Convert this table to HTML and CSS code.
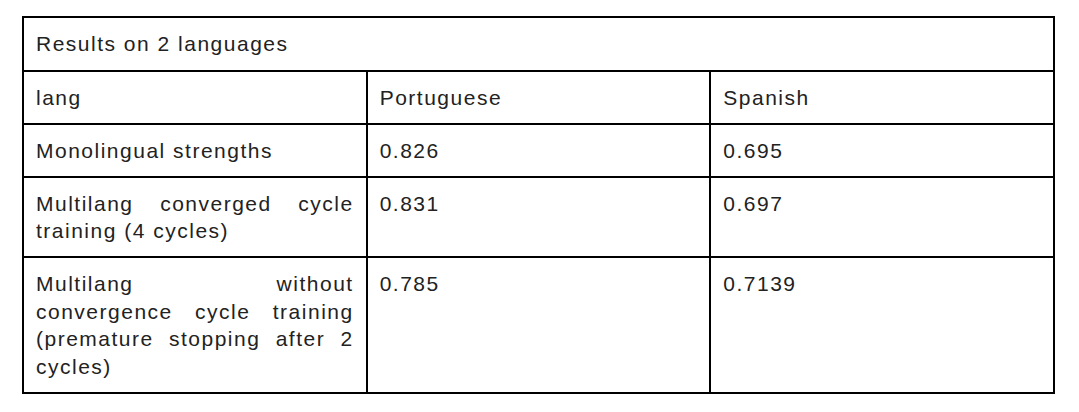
FILE: index.html
```html
<!DOCTYPE html>
<html>
<head>
<meta charset="utf-8">
<link rel="stylesheet" href="styles.css">
</head>
<body>
<table class="results">
  <colgroup><col class="c"><col class="c"><col class="c"></colgroup>
  <tr><td colspan="3" class="title">Results on 2 languages</td></tr>
  <tr><td class="label">lang</td><td>Portuguese</td><td>Spanish</td></tr>
  <tr><td class="label">Monolingual strengths</td><td>0.826</td><td>0.695</td></tr>
  <tr><td class="label">Multilang converged cycle training (4 cycles)</td><td>0.831</td><td>0.697</td></tr>
  <tr><td class="label">Multilang without convergence cycle training (premature stopping after 2 cycles)</td><td>0.785</td><td>0.7139</td></tr>
</table>
</body>
</html>
```
FILE: styles.css
```css
html, body {
  margin: 0;
  padding: 0;
  background: #fff;
}
body {
  padding: 16px 0 0 22px;
  font-family: "Liberation Sans", Arial, sans-serif;
  font-size: 21px;
  line-height: 27.5px;
  letter-spacing: 1.5px;
  color: #222;
}
.results {
  border-collapse: collapse;
  table-layout: fixed;
  width: 1033px;
}
.results td {
  border: 2px solid #000;
  padding: 12px 12px 11.5px 12px;
  vertical-align: top;
  text-align: left;
}
.results td.title {
  padding-bottom: 12px;
}
.results td.label {
  text-align: justify;
}
```
